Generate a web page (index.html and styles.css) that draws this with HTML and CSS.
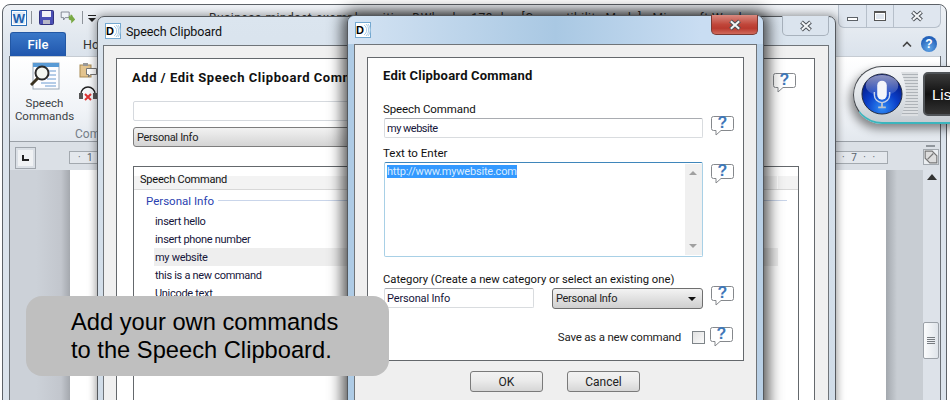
FILE: index.html
```html
<!DOCTYPE html>
<html lang="en">
<head>
<meta charset="utf-8">
<title>Speech Clipboard</title>
<link rel="stylesheet" href="styles.css">
</head>
<body>
<svg class="sprite" aria-hidden="true">
  <symbol id="q" viewBox="0 0 23 21">
    <path d="M2.500 1.500h18a2 2 0 0 1 2 2v10a2 2 0 0 1-2 2H10l-5 4.500v-4.500H2.500a2 2 0 0 1-2-2v-10a2 2 0 0 1 2-2z" fill="#fff" stroke="#85888c"/>
  </symbol>
  <symbol id="d" viewBox="0 0 16 16">
    <rect x=".5" y=".5" width="15" height="15" fill="#fff" stroke="#74a8d0"/>
    <path d="M9 3a6 6 0 0 1 0 10M11 2a8 8 0 0 1 0 12M13 2a9 9 0 0 1 0 12" fill="none" stroke="#a8cbe6"/>
  </symbol>
  <symbol id="x" viewBox="0 0 14 12">
    <path d="M2.500 2l9 8M11.500 2l-9 8" stroke="#4c5157" stroke-width="4"/>
    <path d="M2.800 2.300l8.400 7.400M11.200 2.300l-8.400 7.400" stroke="#f4f6f8" stroke-width="2"/>
  </symbol>
</svg>
<div class="desk">
  <section class="word">
    <div class="word-title">
      <svg class="qat-word" viewBox="0 0 16 16"><rect x=".5" y=".5" width="15" height="15" fill="#fff" stroke="#2a6fb8"/><rect x="2" y="2" width="12" height="12" fill="#dfeaf6"/><text x="8" y="13" text-anchor="middle" class="qat-w">W</text></svg>
      <span class="qat-sep"></span>
      <svg class="qat-save" viewBox="0 0 15 15"><rect x=".5" y=".5" width="14" height="14" rx="1" fill="#4a4fb5" stroke="#33337f"/><rect x="3" y="1" width="9" height="6" fill="#f1f1f7"/><rect x="4" y="10" width="7" height="4" fill="#b8b8c8"/></svg>
      <svg class="qat-speak" viewBox="0 0 20 18"><path d="M1.500 1.500h10v7h-5l-2 3v-3h-3z" fill="#eef2f7" stroke="#6d7480"/><path d="M11 6l2 1v-2h2l1 2 3 4-5 5v-4l-3-1z" fill="#79a945"/></svg>
      <span class="qat-sep qat-sep2"></span>
      <svg class="qat-more" viewBox="0 0 8 8"><rect y="0" width="8" height="1" fill="#222"/><path d="M0 3h8l-4 4z" fill="#222"/></svg>
      <span class="word-name">Business-mindset-example-writing-DWheeler-173.doc [Compatibility Mode] - Microsoft Word</span>
    </div>
    <div class="caption-btns">
      <span class="cap cap-min"><i class="glyph-min"></i></span>
      <span class="cap cap-max"><i class="glyph-max"></i></span>
      <span class="cap cap-close"><svg class="x-glyph"><use href="#x"/></svg></span>
    </div>
    <div class="tabs">
      <span class="tab-file">File</span>
      <span class="tab-home">Home</span>
      <span class="tab-spacer"></span>
      <svg class="collapse" viewBox="0 0 10 7"><path d="M1 5.500l4-4 4 4" fill="none" stroke="#444" stroke-width="1.600"/></svg>
      <span class="help-round">?</span>
    </div>
    <div class="word-main">
      <div class="ribbon">
        <div class="rb-big">
          <svg class="rb-icon" viewBox="0 0 30 30"><rect x="3" y="1" width="26" height="26" fill="#fdfdff" stroke="#9ba9b8"/><rect x="3" y="1" width="26" height="4" fill="#5a9bd5"/><path d="M16 9h10M17 13h9M17 17h9M11 21h15M15 24h11" stroke="#6c9bd0" stroke-width="1"/><circle cx="12" cy="11" r="6.500" fill="#f4f6f0" stroke="#2b2b2b" stroke-width="2"/><path d="M8 16l-7 7" stroke="#3a3220" stroke-width="3"/></svg>
          <span class="rb-label">Speech<br>Commands</span>
        </div>
        <div class="rb-small">
          <svg class="rb-s" viewBox="0 0 18 16"><rect x="1" y="3" width="11" height="12" fill="#e3c48f" stroke="#a98b55"/><rect x="4" y="1" width="5" height="3" fill="#999"/><path d="M7.500 6.500h10v6h-6l-2 2.500v-2.500h-2z" fill="#fff" stroke="#777"/></svg>
          <svg class="rb-s" viewBox="0 0 18 16"><path d="M2 9a7 7 0 0 1 14 0" fill="none" stroke="#222" stroke-width="1.500"/><rect x="0" y="8" width="4" height="6" fill="#555"/><rect x="14" y="8" width="4" height="6" fill="#555"/><path d="M6 9l6 6M12 9l-6 6" stroke="#d33" stroke-width="2"/></svg>
        </div>
        <span class="rb-group">Commands</span>
      </div>
      <div class="doc">
        <div class="ruler-row">
          <span class="tabstop"><i></i></span>
          <div class="ruler"><span>· 1 ·</span><span>· 7 · ·</span></div>
          <span class="split"><i></i><svg viewBox="0 0 12 12"><path d="M1 1h6l4 4v6H5L1 7z" fill="#ddd" stroke="#777"/><path d="M3 8l5-5" stroke="#777"/></svg></span>
        </div>
        <div class="doc-main">
          <div class="margin-l"></div>
          <div class="page"></div>
          <div class="margin-r"></div>
          <div class="vscroll">
            <i class="up"></i>
            <i class="thumb"></i>
          </div>
        </div>
      </div>
    </div>
  </section>

  <section class="dlg dlg-back">
    <header class="dlg-title">
      <svg class="logo" viewBox="0 0 16 16"><use href="#d"/><text x="1" y="12" class="logo-d">D</text></svg>
      <span class="dlg-name">Speech Clipboard</span>
      <span class="dlg-close dlg-close-plain"><svg class="x-glyph"><use href="#x"/></svg></span>
    </header>
    <div class="dlg-body dlg-body-back">
      <div class="panel panel-back">
        <h2 class="h h-back">Add / Edit Speech Clipboard Command</h2>
        <div class="back-field"></div>
        <div class="back-select">Personal Info</div>
        <div class="listbox">
          <div class="list-head">Speech Command</div>
          <div class="group"><span>Personal Info</span><i></i></div>
          <div class="row">insert hello</div>
          <div class="row">insert phone number</div>
          <div class="row row-on">my website</div>
          <div class="row">this is a new command</div>
          <div class="row">Unicode text</div>
        </div>
        <svg class="help help-back" viewBox="0 0 23 21"><use href="#q"/><text x="11.500" y="13" text-anchor="middle" class="qm">?</text></svg>
      </div>
    </div>
  </section>

  <section class="dlg dlg-front">
    <header class="dlg-title dlg-title-blue">
      <svg class="logo" viewBox="0 0 16 16"><use href="#d"/><text x="1" y="12" class="logo-d">D</text></svg>
      <span class="dlg-close"><svg class="x-glyph"><use href="#x"/></svg></span>
    </header>
    <div class="dlg-body">
      <div class="panel panel-front">
        <h2 class="h h-front">Edit Clipboard Command</h2>
        <label class="lbl lbl-1">Speech Command</label>
        <div class="line">
          <div class="field field-wide">my website</div>
          <svg class="help help-up" viewBox="0 0 23 21"><use href="#q"/><text x="11.500" y="13" text-anchor="middle" class="qm">?</text></svg>
        </div>
        <label class="lbl lbl-2">Text to Enter</label>
        <div class="line">
          <div class="area">
            <div class="area-text"><span class="sel">http://www.mywebsite.com</span></div>
            <div class="area-bar"><i class="aup"></i><i class="adn"></i></div>
          </div>
          <svg class="help help-area" viewBox="0 0 23 21"><use href="#q"/><text x="11.500" y="13" text-anchor="middle" class="qm">?</text></svg>
        </div>
        <label class="lbl lbl-3">Category (Create a new category or select an existing one)</label>
        <div class="line">
          <div class="field field-cat">Personal Info</div>
          <div class="combo"><span>Personal Info</span><i></i></div>
          <svg class="help help-up" viewBox="0 0 23 21"><use href="#q"/><text x="11.500" y="13" text-anchor="middle" class="qm">?</text></svg>
        </div>
        <div class="line line-save">
          <span class="save-text">Save as a new command</span>
          <span class="check"></span>
          <svg class="help" viewBox="0 0 23 21"><use href="#q"/><text x="11.500" y="13" text-anchor="middle" class="qm">?</text></svg>
        </div>
      </div>
      <div class="btns">
        <span class="btn">OK</span>
        <span class="btn">Cancel</span>
      </div>
    </div>
  </section>

  <aside class="mic">
    <svg class="mic-ball" viewBox="0 0 44 44">
      <defs>
        <radialGradient id="ball" cx=".5" cy=".85" r=".8"><stop offset="0" stop-color="#2f8cf5"/><stop offset=".5" stop-color="#0a3ec8"/><stop offset="1" stop-color="#05157a"/></radialGradient>
        <linearGradient id="gloss" x1="0" y1="0" x2="0" y2="1"><stop offset="0" stop-color="#fff" stop-opacity=".55"/><stop offset="1" stop-color="#fff" stop-opacity=".08"/></linearGradient>
      </defs>
      <circle cx="22" cy="22" r="21" fill="url(#ball)" stroke="#222a3c"/>
      <ellipse cx="22" cy="13" rx="17" ry="11" fill="url(#gloss)"/>
      <rect x="17" y="8" width="10" height="20" rx="5" fill="#f4f6fa"/>
      <path d="M14 20v3a8 8 0 0 0 16 0v-3" fill="none" stroke="#c9d4e8" stroke-width="1.500"/>
      <path d="M22 31v5M18 36h8" stroke="#b9c2cc" stroke-width="2"/>
    </svg>
    <span class="mic-grip"></span>
    <span class="mic-btn">Listening</span>
  </aside>

  <div class="note">Add your own commands<br>to the Speech Clipboard.</div>
</div>
</body>
</html>
```
FILE: styles.css
```css
* { box-sizing: border-box; }
html, body { margin: 0; padding: 0; }
body { width: 950px; height: 400px; overflow: hidden; background: #fff; font-family: Roboto, "Liberation Sans", sans-serif; font-size: 11px; color: #111; }
.sprite { position: absolute; width: 0; height: 0; }
.desk { position: relative; width: 950px; height: 400px; overflow: hidden; }
.x-glyph { width: 14px; height: 12px; display: block; }
.logo-d { font: 900 11px "Liberation Sans", sans-serif; fill: #000; }

/* Word window */
.word { position: absolute; left: 2px; top: 4px; width: 945px; height: 420px; border: 1px solid #5d6268; border-radius: 8px 8px 0 0; background: linear-gradient(#eef1f5, #dbe3ec 50px); display: flex; flex-direction: column; overflow: hidden; }
.word-title { height: 27px; flex: none; display: flex; align-items: center; padding: 0 0 2px 8px; }
.qat-word { width: 16px; height: 16px; }
.qat-w { font: bold 13px "Liberation Sans", sans-serif; fill: #1d5fae; }
.qat-sep { width: 1px; height: 13px; background: #8d939a; margin: 0 7px 0 4px; }
.qat-sep2 { margin: 0 4px 0 6px; }
.qat-save { width: 15px; height: 15px; }
.qat-speak { width: 16px; height: 16px; margin-left: 6px; }
.qat-more { width: 8px; height: 8px; margin: 2px 0 0 1px; }
.word-name { margin-left: 113px; white-space: nowrap; font-size: 12px; letter-spacing: .5px; color: #333; }
.caption-btns { position: absolute; right: 5px; top: -1px; display: flex; height: 24px; border: 1px solid #b6bfca; border-width: 0 1px 1px 1px; border-radius: 0 0 6px 6px; background: #dfe6ef; }
.cap { display: flex; align-items: center; justify-content: center; height: 23px; border-right: 1px solid #b6bfca; color: #555; }
.cap-min { width: 28px; }
.cap-max { width: 27px; }
.cap-close { width: 46px; border: 0; }
.glyph-min { width: 11px; height: 4px; margin-top: 7px; background: #fff; border: 1px solid #5c6167; }
.glyph-max { width: 12px; height: 10px; border: 1px solid #555; border-top-width: 2px; box-shadow: inset 0 0 0 1px #fff; }
.tabs { height: 24px; flex: none; display: flex; align-items: center; padding: 0 9px 0 7px; }
.tab-file { width: 56px; height: 24px; background: linear-gradient(#3a78c8, #2056ad); border: 1px solid #2257a4; border-bottom: 0; border-radius: 3px 3px 0 0; color: #fff; display: flex; align-items: center; justify-content: center; font-size: 13px; font-weight: 500; }
.tab-home { margin-left: 17px; color: #333; font-size: 12.500px; }
.tab-spacer { flex: 1; }
.collapse { width: 10px; height: 7px; margin-right: 9px; }
.help-round { width: 16px; height: 16px; border-radius: 50%; background: radial-gradient(circle at 50% 75%, #63a8e8, #2462ba 70%); color: #fff; font: bold 12px "Liberation Sans", sans-serif; display: flex; align-items: center; justify-content: center; }
.word-main { flex: 1; display: flex; flex-direction: column; margin: 0 5px 0 6px; border: solid #6a6f75; border-width: 0 1px; }
.ribbon { position: relative; height: 86px; flex: none; background: linear-gradient(#fff, #f0f3f7 65%, #e3e8ee); border-top: 1px solid #c6ccd3; border-bottom: 1px solid #9aa0a7; display: flex; padding-top: 5px; }
.rb-big { width: 69px; display: flex; flex-direction: column; align-items: center; }
.rb-icon { width: 30px; height: 30px; }
.rb-label { font-size: 11.500px; line-height: 13px; text-align: center; color: #3b3f45; margin-top: 5px; }
.rb-small { display: flex; flex-direction: column; gap: 7px; }
.rb-s { width: 18px; height: 16px; }
.rb-group { position: absolute; left: 65px; bottom: 0; color: #777f88; font-size: 12px; }
.doc { flex: 1; display: flex; flex-direction: column; background: #cdd3da; }
.ruler-row { height: 28px; flex: none; display: flex; align-items: center; background: #dbe0e6; position: relative; }
.tabstop { width: 21px; height: 22px; margin: 4px 0 0 5px; border: 1px solid #9fa5ac; background: #f0f2f4; box-shadow: inset 0 0 0 2px #dbe0e6; display: flex; align-items: center; justify-content: center; }
.tabstop i { width: 7px; height: 6px; border: solid #222; border-width: 0 0 2px 2px; }
.ruler { width: 819px; margin: 3px 0 0 33px; height: 13px; border: 1px solid #a3a9af; background: #e4e8ed; font-size: 10px; color: #55606b; display: flex; align-items: center; justify-content: space-between; padding: 0 10px 0 8px; letter-spacing: 2px; white-space: nowrap; }
.split { position: absolute; right: 1px; top: 1px; width: 17px; height: 28px; display: flex; flex-direction: column; align-items: center; padding-top: 2px; }
.split i { width: 9px; height: 2px; background: #90969c; margin-bottom: 2px; flex: none; }
.split svg { width: 16px; height: 16px; flex: none; background: #ebeef1; border: 1px solid #a3a9af; }
.doc-main { flex: 1; display: flex; }
.margin-l { width: 60px; flex: none; background: linear-gradient(90deg, #ccd1d8 44%, #c2c6cd 85%, #a4a8ae 100%); }
.page { width: 816px; flex: none; background: #fff; }
.margin-r { width: 37px; flex: none; background: linear-gradient(90deg, #a3a8ae, #c8cdd3 30%); }
.vscroll { flex: 1; background: #dde2e9; position: relative; display: flex; flex-direction: column; align-items: center; }
.up { margin-top: 4px; width: 0; height: 0; border: 5px solid transparent; border-top: 0; border-bottom: 6px solid #333; }
.thumb { position: absolute; top: 152px; left: 0; width: 16px; height: 37px; background: linear-gradient(90deg, #fbfcfd, #dfe4ea); border: 1px solid #9ba1a8; border-radius: 2px; }
.thumb::after { content: ""; position: absolute; left: 3px; top: 14px; width: 8px; height: 8px; background: repeating-linear-gradient(#767b80 0 1px, transparent 1px 2px); }

/* Dialogs */
.dlg { position: absolute; display: flex; flex-direction: column; border: 1px solid #55595e; border-radius: 7px 7px 0 0; }
.dlg-back { left: 97px; top: 16px; width: 739px; height: 420px; background: linear-gradient(#dbe5ef, #d9e3ed 40px, #cfdbe7); box-shadow: 0 0 9px 1px rgba(0,0,0,.4); }
.dlg-front { left: 347px; top: 15px; width: 417px; height: 420px; background: linear-gradient(90deg, #aecbe5, #b9d0e6); box-shadow: 0 0 15px 4px rgba(0,0,0,.72); }
.dlg-title { position: relative; height: 28px; flex: none; display: flex; align-items: center; padding: 0 0 0 7px; }
.dlg-title-blue { background: linear-gradient(90deg, #d4e3f3, #a9c8e3 50%, #c9ddf2 85%); border-radius: 7px 7px 0 0; }
.logo { width: 16px; height: 16px; flex: none; }
.dlg-name { margin-left: 5px; font-size: 12.500px; letter-spacing: -.1px; color: #111; }
.dlg-close { position: absolute; right: 5px; top: -1px; width: 47px; height: 20px; border: 1px solid #7b3a33; border-top: 0; border-radius: 0 0 5px 5px; background: linear-gradient(#d98a80, #c0463a 50%, #b93a2f 70%, #d06a5c); display: flex; align-items: center; justify-content: center; }
.dlg-close-plain { right: 6px; border-color: #a8b2bd; background: #dbe4ee; }
.dlg-body { margin: 0 6px 0 6px; flex: 1; background: #efefef; border: 1px solid #6f7479; padding: 12px 12px 0; display: flex; flex-direction: column; }
.dlg-body-back { margin: 0 6px 0 5px; background: #f0f0f0; padding-right: 13px; }
.panel { background: #fff; border: 1px solid #64686c; }
.panel-back { position: relative; flex: 1; padding: 0 0 0 16px; }
.panel-front { height: 304px; flex: none; padding: 0 0 0 15px; display: flex; flex-direction: column; }
.h { margin: 10px 0 0; font-size: 13px; line-height: 16px; font-weight: 700; color: #111; white-space: nowrap; }
.h-front { letter-spacing: .2px; }
.h-back { margin: 11px 0 0 -1px; letter-spacing: .55px; }
.back-field { margin-top: 15px; width: 620px; height: 20px; border: 1px solid #d5d9de; border-radius: 2px; }
.back-select { margin-top: 6px; width: 620px; height: 20px; border: 1px solid #7d7d7d; border-radius: 3px; background: linear-gradient(#f2f2f2, #d4d4d4); padding-left: 3px; line-height: 19px; letter-spacing: -.3px; color: #222; }
.listbox { margin-top: 19px; width: 666px; height: 300px; border: 1px solid #64686c; }
.list-head { position: relative; height: 23px; padding-left: 6px; line-height: 25px; letter-spacing: -.2px; background: linear-gradient(#fff 9px, #f3f3f3 9px); border-bottom: 1px solid #d8d8d8; }
.list-head::after { content: ""; position: absolute; right: 20px; top: 0; width: 1px; height: 22px; background: #fff; }
.group { margin: 0 11px 1px 12px; height: 21px; display: flex; align-items: center; gap: 4px; color: #2a3fb0; font-size: 11.500px; }
.group i { flex: 1; height: 1px; background: #c9d5ea; }
.row { height: 18px; line-height: 20px; margin: 0 20px; padding-left: 1px; letter-spacing: -.3px; color: #16163a; white-space: nowrap; }
.row-on { background: #eee; }
.help { width: 23px; height: 21px; flex: none; overflow: visible; }
.help-back { position: absolute; left: 656px; top: 13px; }
.help-up { margin-top: -3px; }
.qm { font: bold 16px/16px "Liberation Sans", sans-serif; fill: #3f78b9; }
.lbl { display: block; line-height: 15px; color: #111; white-space: nowrap; font-size: 11.250px; }
.lbl-1 { margin-top: 18px; font-size: 11.500px; letter-spacing: -.1px; }
.lbl-2 { margin-top: 8px; font-size: 11.500px; }
.lbl-3 { margin-top: 15px; }
.line { display: flex; align-items: flex-start; width: 351px; margin-top: 1px; padding-left: 1px; }
.field { height: 20px; border: 1px solid #d9dcdf; border-top-color: #a9acb1; border-radius: 2px; line-height: 20px; padding-left: 2px; background: #fff; color: #15153a; }
.field-wide { width: 319px; margin-right: 8px; letter-spacing: -.5px; }
.area { display: flex; width: 319px; height: 95px; border: 1px solid #a8d0e6; border-top-color: #3f86bb; border-radius: 2px; margin-right: 8px; }
.area-text { flex: 1; padding: 2px 2px; line-height: 13px; letter-spacing: -.2px; }
.sel { background: #3399ff; color: #d8ecff; }
.area-bar { width: 17px; background: #f0f0f0; margin: 1px 0; position: relative; }
.aup, .adn { position: absolute; left: 4px; width: 0; height: 0; border: 4px solid transparent; }
.aup { top: 7px; border-top: 0; border-bottom: 4px solid #a0a0a0; }
.adn { bottom: 7px; border-bottom: 0; border-top: 4px solid #a0a0a0; }
.help-area { margin-top: 1px; }
.field-cat { width: 150px; margin-right: 18px; letter-spacing: -.15px; }
.combo { width: 151px; height: 21px; border: 1px solid #6f6f6f; border-radius: 3px; background: linear-gradient(#f3f3f3, #cfcfcf); display: flex; align-items: center; justify-content: space-between; padding: 0 6px 0 3px; margin-right: 8px; letter-spacing: -.3px; color: #222; }
.combo i { width: 0; height: 0; border: 4px solid transparent; border-bottom: 0; border-top: 4px solid #111; }
.line-save { margin-top: 17px; justify-content: flex-end; align-items: center; padding-right: 1px; }
.save-text { margin: 1px 11px 0 0; white-space: nowrap; color: #222; font-size: 11.500px; letter-spacing: -.2px; }
.check { width: 13px; height: 13px; border: 1px solid #7e8488; background: linear-gradient(135deg, #e2e2e2, #fafafa); margin: 1px 5px 0 0; }
.btns { display: flex; justify-content: center; gap: 24px; margin-top: 10px; padding-right: 1px; }
.btn { width: 73px; height: 21px; border: 1px solid #7a7a7a; border-radius: 3px; background: linear-gradient(#f2f2f2, #ebebeb 45%, #d6d6d6); display: flex; align-items: center; justify-content: center; color: #222; font-size: 12px; }

/* Microphone widget */
.mic { position: absolute; left: 853px; top: 66px; width: 110px; height: 58px; border: 1px solid #45494e; border-bottom: 2px solid #3bb5bd; border-right: 0; border-radius: 29px 0 0 29px; background: linear-gradient(#f5f6f8, #e2e6ea 50%, #c5cbd1); box-shadow: -3px 5px 10px rgba(0,0,0,.45); display: flex; align-items: center; padding: 0 0 1px 7px; }
.mic-ball { width: 42px; height: 42px; flex: none; }
.mic-grip { width: 17px; height: 44px; flex: none; margin-left: -2px; background: repeating-linear-gradient(#dcdfe2 0 2px, #aeb3b8 2px 3px); clip-path: path("M0 0H17V44H0Q10 22 0 0Z"); }
.mic-btn { margin-left: 5px; width: 70px; height: 44px; flex: none; border: 2px solid #505458; border-radius: 5px; background: linear-gradient(#3b3b3b, #111 50%, #333); color: #fff; font: 15px "Liberation Sans", sans-serif; padding: 12px 0 0 7px; white-space: nowrap; overflow: hidden; }

/* Caption */
.note { position: absolute; left: 26px; top: 296px; width: 363px; height: 80px; border-radius: 16px; background: #bfbfbf; color: #000; font: 23.700px/28px "Liberation Sans", Arial, sans-serif; padding: 12px 0 0 45px; }
```
